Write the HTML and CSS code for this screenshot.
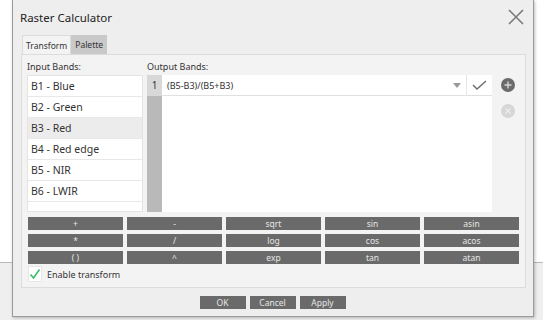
FILE: index.html
```html
<!DOCTYPE html>
<html lang="en">
<head>
  <meta charset="UTF-8">
  <title>Raster Calculator</title>
  <link rel="stylesheet" href="styles.css">
</head>
<body>
  <div class="dialog">
    <!-- Title bar -->
    <div class="titlebar">
      <span class="title">Raster Calculator</span>
      <svg class="close" width="16" height="16" viewBox="0 0 16 16">
        <path d="M1 1 L15 15 M15 1 L1 15" stroke="#7a7a7a" stroke-width="1.6" fill="none"/>
      </svg>
    </div>

    <!-- Tabs -->
    <div class="tabs">
      <div class="tab active">Transform</div>
      <div class="tab">Palette</div>
    </div>

    <div class="panel">
      <div class="bands">
        <div class="input-col">
          <div class="label">Input Bands:</div>
          <ul class="band-list">
            <li>B1 - Blue</li>
            <li>B2 - Green</li>
            <li class="selected">B3 - Red</li>
            <li>B4 - Red edge</li>
            <li>B5 - NIR</li>
            <li>B6 - LWIR</li>
          </ul>
        </div>
        <div class="output-col">
          <div class="label">Output Bands:</div>
          <div class="output-box">
            <div class="gutter">
              <div class="line-no">1</div>
            </div>
            <div class="entries">
              <div class="entry">
                <span class="expr">(B5-B3)/(B5+B3)</span>
                <span class="arrow"></span>
                <span class="accept">
                  <svg width="15" height="10" viewBox="0 0 15 10">
                    <path d="M1 5 L5 9 L14 1" stroke="#6f6f6f" stroke-width="1.5" fill="none"/>
                  </svg>
                </span>
              </div>
            </div>
          </div>
        </div>
        <div class="side-col">
          <svg class="round-btn" width="14" height="14" viewBox="0 0 14 14">
            <circle cx="7" cy="7" r="7" fill="#6b6b6b"/>
            <path d="M7 3.5 V10.5 M3.5 7 H10.5" stroke="#d8d8d8" stroke-width="1.4"/>
          </svg>
          <svg class="round-btn" width="14" height="14" viewBox="0 0 14 14">
            <circle cx="7" cy="7" r="7" fill="#d6d6d6"/>
            <path d="M4.5 4.5 L9.5 9.5 M9.5 4.5 L4.5 9.5" stroke="#eeeeee" stroke-width="1.2"/>
          </svg>
        </div>
      </div>

      <!-- Operator buttons -->
      <div class="ops">
        <button>+</button>
        <button>-</button>
        <button>sqrt</button>
        <button>sin</button>
        <button>asin</button>
        <button>*</button>
        <button>/</button>
        <button>log</button>
        <button>cos</button>
        <button>acos</button>
        <button>( )</button>
        <button>^</button>
        <button>exp</button>
        <button>tan</button>
        <button>atan</button>
      </div>

      <label class="enable">
        <span class="checkbox">
          <svg width="12" height="12" viewBox="0 0 12 12">
            <path d="M1.5 6.5 L4.5 10 L10.5 1.5" stroke="#3dbb6a" stroke-width="1.6" fill="none"/>
          </svg>
        </span>
        Enable transform
      </label>
    </div>

    <div class="footer">
      <button>OK</button>
      <button>Cancel</button>
      <button>Apply</button>
    </div>
  </div>
</body>
</html>
```

FILE: styles.css
```css
/* Page behind the dialog */
body {
  margin: 0;
  height: 320px;
  overflow: hidden;
  font-family: "Noto Sans", "Open Sans", sans-serif;
  color: #333;
  background: linear-gradient(to bottom, #ffffff 0, #ffffff 262px, #b9b9b9 262px, #b9b9b9 263px, #efefef 263px);
}

/* Dialog window */
.dialog {
  margin-left: 12px;
  width: 520px;
  height: 316px;
  background: #eeeeee;
  border: 1px solid #9a9a9a;
  border-top: none;
  box-shadow: 1px 1px 3px rgba(0, 0, 0, 0.25);
  display: flex;
  flex-direction: column;
}

.titlebar {
  height: 35px;
  display: flex;
  align-items: center;
  justify-content: space-between;
  padding: 0 9px 0 7px;
}
.title {
  font-size: 11.5px;
  color: #222;
  padding-bottom: 1px;
}
.close {
  margin-top: -2px;
}

/* Tabs */
.tabs {
  display: flex;
  margin-left: 9px;
  height: 19px;
}
.tab {
  font-size: 8.5px;
  padding: 0 4px;
  display: flex;
  align-items: center;
  color: #333;
  background: #c9c9c9;
}
.tab.active {
  background: #f3f3f3;
  border: 1px solid #dcdcdc;
  border-bottom: none;
  padding: 0 3px 0 3px;
}

/* Tab panel */
.panel {
  margin: 0 7px 0 8px;
  height: 234px;
  box-sizing: border-box;
  background: #f3f3f3;
  border: 1px solid #dcdcdc;
  padding: 3px 6px 0 5px;
}

.bands {
  display: flex;
}
.label {
  font-size: 9px;
  height: 17px;
  line-height: 17px;
  color: #333;
}
.input-col {
  width: 116px;
}
.band-list {
  list-style: none;
  margin: 0;
  padding: 0;
  height: 137px;
  background: #fff;
  border: 1px solid #e4e4e4;
  box-sizing: border-box;
}
.band-list li {
  height: 21px;
  line-height: 20px;
  font-size: 10.5px;
  padding-left: 3px;
  border-bottom: 1px solid #e8e8e8;
  box-sizing: border-box;
  color: #333;
}
.band-list li.selected {
  background: #ececec;
}

.output-col {
  width: 345px;
  margin-left: 4px;
}
.output-box {
  display: flex;
  height: 137px;
  background: #fff;
}
.gutter {
  width: 15px;
  background: #b9b9b9;
}
.line-no {
  height: 21px;
  line-height: 21px;
  background: #d8d8d8;
  text-align: center;
  font-size: 10px;
  color: #333;
}
.entries {
  flex: 1;
}
.entry {
  height: 21px;
  display: flex;
  align-items: center;
  border-bottom: 1px solid #e0e0e0;
  box-sizing: border-box;
}
.expr {
  flex: 1;
  font-size: 9px;
  padding-left: 5px;
  color: #333;
}
.arrow {
  width: 0;
  height: 0;
  border-left: 4px solid transparent;
  border-right: 4px solid transparent;
  border-top: 5px solid #9a9a9a;
  margin-right: 5px;
}
.accept {
  height: 21px;
  width: 25px;
  border-left: 1px solid #e6e6e6;
  display: flex;
  align-items: center;
  justify-content: center;
}

.side-col {
  flex: 1;
  display: flex;
  flex-direction: column;
  align-items: center;
  gap: 12px;
  padding-top: 20px;
  padding-left: 5px;
}

/* Operator grid */
.ops {
  display: grid;
  grid-template-columns: repeat(5, 95px);
  gap: 4px 4px;
  margin-top: 5px;
  margin-left: 1px;
}
button {
  height: 13px;
  padding: 0;
  border: none;
  background: #6a6a6a;
  color: #e6e6e6;
  font-family: "Noto Sans", "Open Sans", sans-serif;
  font-size: 8.5px;
  line-height: 13px;
}

.enable {
  display: flex;
  align-items: center;
  gap: 5px;
  margin-top: 2px;
  margin-left: 1px;
  font-size: 9px;
  color: #333;
}
.checkbox {
  width: 14px;
  height: 16px;
  background: #fff;
  border: 1px solid #e6e6e6;
  box-sizing: border-box;
  display: flex;
  align-items: center;
  justify-content: center;
}

/* Bottom buttons */
.footer {
  display: flex;
  justify-content: center;
  gap: 4px;
  margin-top: 8px;
  padding-right: 1px;
}
.footer button {
  width: 46px;
}
```
